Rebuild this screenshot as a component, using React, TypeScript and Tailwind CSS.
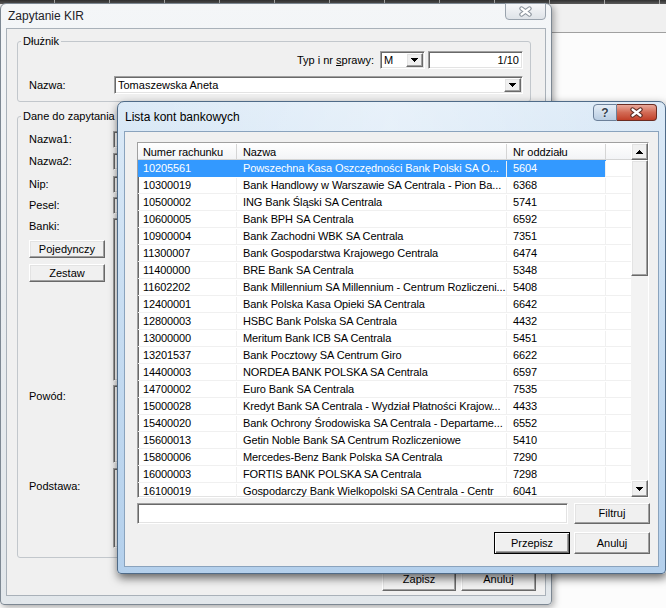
import React from "react";

const banks: [string, string, string][] = [
  ["10205561", "Powszechna Kasa Oszczędności Bank Polski SA O...", "5604"],
  ["10300019", "Bank Handlowy w Warszawie SA Centrala - Pion Ba...", "6368"],
  ["10500002", "ING Bank Śląski SA Centrala", "5741"],
  ["10600005", "Bank BPH SA Centrala", "6592"],
  ["10900004", "Bank Zachodni WBK SA Centrala", "7351"],
  ["11300007", "Bank Gospodarstwa Krajowego Centrala", "6474"],
  ["11400000", "BRE Bank SA Centrala", "5348"],
  ["11602202", "Bank Millennium SA Millennium - Centrum Rozliczeni...", "5408"],
  ["12400001", "Bank Polska Kasa Opieki SA Centrala", "6642"],
  ["12800003", "HSBC Bank Polska SA Centrala", "4432"],
  ["13000000", "Meritum Bank ICB SA Centrala", "5451"],
  ["13201537", "Bank Pocztowy SA Centrum Giro", "6622"],
  ["14400003", "NORDEA BANK POLSKA SA Centrala", "6597"],
  ["14700002", "Euro Bank SA Centrala", "7535"],
  ["15000028", "Kredyt Bank SA Centrala - Wydział Płatności Krajow...", "4433"],
  ["15400020", "Bank Ochrony Środowiska SA Centrala - Departame...", "6552"],
  ["15600013", "Getin Noble Bank SA Centrum Rozliczeniowe", "5410"],
  ["15800006", "Mercedes-Benz Bank Polska SA Centrala", "7290"],
  ["16000003", "FORTIS BANK POLSKA SA Centrala", "7298"],
  ["16100019", "Gospodarczy Bank Wielkopolski SA Centrala - Centr", "6041"],
];

const sunken =
  "border border-t-[#a0a0a0] border-l-[#a0a0a0] border-r-white border-b-white shadow-[inset_1px_1px_0_#696969,inset_-1px_-1px_0_#e3e3e3]";
const raised =
  "bg-[#f0f0f0] border border-t-white border-l-white border-r-[#696969] border-b-[#696969] shadow-[inset_-1px_-1px_0_#a0a0a0,inset_1px_1px_0_#e3e3e3]";

// classic stepped arrow, 7px wide
function Tri({ up }: { up?: boolean }) {
  return (
    <svg width="7" height="4" viewBox="0 0 7 4" shapeRendering="crispEdges" className={up ? "rotate-180" : ""}>
      <path d="M0 0H7V1H6V2H5V3H4V4H3V3H2V2H1V1H0Z" fill="#000" />
    </svg>
  );
}

function XGlyph({ line, edge }: { line: string; edge: string }) {
  return (
    <svg width="15" height="11" viewBox="0 0 15 11">
      <path d="M3.5 2.5L11.5 8.5M11.5 2.5L3.5 8.5" stroke={edge} strokeWidth="4.4" strokeLinecap="round" fill="none" />
      <path d="M3.5 2.5L11.5 8.5M11.5 2.5L3.5 8.5" stroke={line} strokeWidth="2.2" strokeLinecap="round" fill="none" />
    </svg>
  );
}

function Combo({ text, className }: { text: string; className: string }) {
  return (
    <div className={`flex items-stretch bg-white ${sunken} ${className}`}>
      <span className="flex-1 pl-[3px] leading-[16px] whitespace-nowrap overflow-hidden">{text}</span>
      <div className={`w-[17px] m-[1px] flex items-center justify-center ${raised}`}>
        <Tri />
      </div>
    </div>
  );
}

function Button({ label, className }: { label: string; className: string }) {
  return <div className={`flex items-center justify-center ${raised} ${className}`}>{label}</div>;
}

function FormRow({
  label,
  className,
  labelClass,
  text,
}: {
  label: string;
  className: string;
  labelClass: string;
  text?: string;
}) {
  return (
    <div className={`flex ${className}`}>
      <div className={`w-[84px] shrink-0 ${labelClass}`}>{label}</div>
      <div className={`flex-1 bg-white pl-[3px] pt-[5px] ${sunken}`}>{text}</div>
    </div>
  );
}

export default function App() {
  return (
    <div className="relative w-[666px] h-[608px] overflow-hidden bg-[#fcfcfc] font-['Liberation_Sans',Arial,sans-serif] text-[11px] leading-[13px] text-black">
      {/* application behind the windows */}
      <div className="flex h-[4px] bg-linear-to-b from-[#303030] to-[#5c5c5c]">
        {Array.from({ length: 12 }).map((_, i) => (
          <div key={i} className="w-[55px] shrink-0 border-r border-[#a8a8a8]" />
        ))}
      </div>
      <div className="h-[29px] bg-[#f0f0f0] border-b border-[#a0a0a0]" />

      {/* Zapytanie KIR (inactive parent) */}
      <div className="absolute left-0 top-[3px] w-[552px] h-[602px] flex flex-col rounded-t-[6px] rounded-b-[4px] border border-[#7d8893] bg-linear-to-b from-[#f4f6f8] via-[#e9edf0] to-[#e2e7eb] shadow-[2px_2px_7px_rgba(0,0,0,0.35)]">
        <div className="h-[24px] shrink-0 flex items-start">
          <span className="pl-[7px] pt-[5px] text-[12px] leading-[15px] text-[#1e2328]">Zapytanie KIR</span>
          <div className="ml-auto mr-[5px] mt-[-1px] w-[41px] h-[17px] flex items-center justify-center rounded-b-[4px] border border-[#9aa3ad] bg-linear-to-b from-[#f6f7f9] to-[#dfe3e8]">
            <XGlyph line="#ffffff" edge="#8b939c" />
          </div>
        </div>
        <div className="flex-1 mx-[5px] mb-[8px] border border-[#a9b1b9] bg-[#f0f0f0] flex flex-col">
          <fieldset className="mt-[6px] ml-[10px] mr-[14px] border border-[#c2c7cc] rounded-[3px]">
            <legend className="ml-[3px] px-[2px] h-[13px] leading-[13px]">Dłużnik</legend>
            <div className="mt-[3px] h-[18px] flex items-center justify-end pr-[7px]">
              <span>
                Typ i nr <span className="underline">s</span>prawy:
              </span>
              <Combo text="M" className="ml-[6px] w-[45px] h-[18px]" />
              <div className={`ml-[3px] w-[95px] h-[18px] bg-white text-right pr-[3px] leading-[16px] ${sunken}`}>1/10</div>
            </div>
            <div className="mt-[7px] mb-[7px] h-[18px] flex items-center pl-[11px] pr-[7px]">
              <span className="w-[85px] shrink-0">Nazwa:</span>
              <Combo text="Tomaszewska Aneta" className="flex-1 h-[18px]" />
            </div>
          </fieldset>

          <fieldset className="mt-[8px] ml-[10px] mr-[14px] border border-[#c2c7cc] rounded-[3px]">
            <legend className="ml-[3px] px-[2px] h-[13px] leading-[13px]">Dane do zapytania</legend>
            <div className="flex flex-col pt-[8px] pl-[11px] pr-[7px] pb-[9px]">
              <FormRow label="Nazwa1:" className="h-[17px]" labelClass="self-center" />
              <FormRow label="Nazwa2:" className="mt-[5px] h-[17px]" labelClass="self-center" />
              <FormRow label="Nip:" className="mt-[6px] h-[17px]" labelClass="self-center" />
              <FormRow label="Pesel:" className="mt-[4px] h-[17px]" labelClass="self-center" />
              <div className="mt-[4px] h-[163px] flex">
                <div className="w-[84px] shrink-0 flex flex-col pt-[2px]">
                  <span>Banki:</span>
                  <Button label="Pojedynczy" className="mt-[7px] w-[76px] h-[18px]" />
                  <Button label="Zestaw" className="mt-[6px] w-[76px] h-[18px]" />
                </div>
                <div className={`flex-1 bg-white ${sunken}`} />
              </div>
              <FormRow label="Powód:" className="mt-[4px] h-[78px]" labelClass="pt-[5px]" text="Z" />
              <FormRow label="Podstawa:" className="mt-[5px] h-[80px]" labelClass="pt-[12px]" text="I" />
            </div>
          </fieldset>

          <div className="mt-[10px] mr-[9px] flex justify-end gap-[5px]">
            <Button label="Zapisz" className="w-[74px] h-[23px]" />
            <Button label="Anuluj" className="w-[75px] h-[23px]" />
          </div>
        </div>
      </div>

      {/* Lista kont bankowych (active modal) */}
      <div className="absolute left-[117px] top-[101px] w-[549px] h-[473px] flex flex-col rounded-t-[7px] rounded-b-[4px] border border-[#4f6b88] bg-linear-to-b from-[#dceaf7] via-[#c6dcf1] to-[#b4d0ec] shadow-[1px_4px_10px_rgba(0,0,0,0.6)]">
        <div className="h-[29px] shrink-0 flex items-start bg-linear-to-r from-transparent via-[rgba(255,255,255,0.35)] to-transparent">
          <span className="pl-[7px] pt-[8px] text-[12px] leading-[15px]">Lista kont bankowych</span>
          <div className="ml-auto mr-[8px] mt-[2px] flex">
            <div className="w-[24px] h-[17px] flex items-center justify-center rounded-l-[4px] border border-[#6c8099] bg-linear-to-b from-[#e4edf6] to-[#b9cde2] text-[12px] font-bold leading-[12px] text-[#34404c] [text-shadow:0_0_2px_#fff]">
              ?
            </div>
            <div className="w-[40px] h-[17px] flex items-center justify-center rounded-r-[4px] border border-l-0 border-[#6b2c22] bg-linear-to-b from-[#e9a99b] via-[#d26a55] to-[#c13f28]">
              <XGlyph line="#ffffff" edge="#5a2a22" />
            </div>
          </div>
        </div>

        <div className="flex-1 mx-[6px] mb-[6px] border border-[#8aa3bd] bg-[#f0f0f0] flex flex-col pt-[10px] pl-[12px] pr-[8px]">
          <div className={`w-[512px] h-[356px] shrink-0 flex bg-white ${sunken}`}>
            <div className="flex-1 flex flex-col overflow-hidden tracking-[-0.1px]">
              <div className="h-[17px] shrink-0 flex bg-linear-to-b from-white to-[#f3f4f6] border-b border-[#d5d5d5] leading-[16px] pt-[1px]">
                <div className="w-[99px] shrink-0 pl-[5px] border-r border-[#d5d5d5]">Numer rachunku</div>
                <div className="w-[270px] shrink-0 pl-[6px] border-r border-[#d5d5d5]">Nazwa</div>
                <div className="w-[99px] shrink-0 pl-[6px] border-r border-[#d5d5d5]">Nr oddziału</div>
                <div className="flex-1" />
              </div>
              <div className="flex-1 overflow-hidden">
                {banks.map(([nr, name, branch], i) => {
                  const sel = i === 0;
                  return (
                    <div key={nr} className="h-[17px] flex leading-[15px]">
                      <div className={`flex pt-[1px] ${sel ? "bg-[#3399ff] text-white" : "border-b border-[#f0f0f0]"}`}>
                        <div className={`w-[99px] shrink-0 pl-[5px] ${sel ? "" : "border-r border-[#f0f0f0]"}`}>{nr}</div>
                        <div className="w-[270px] shrink-0 pl-[6px] whitespace-nowrap overflow-hidden border-r border-[#f0f0f0]">
                          {name}
                        </div>
                        <div className="w-[99px] shrink-0 pl-[6px] border-r border-[#f0f0f0]">{branch}</div>
                      </div>
                      <div className="flex-1 border-b border-[#f0f0f0]" />
                    </div>
                  );
                })}
              </div>
            </div>
            {/* scrollbar */}
            <div className="w-[17px] shrink-0 flex flex-col bg-[#f3f3f3]">
              <div className={`h-[17px] shrink-0 flex items-center justify-center ${raised}`}>
                <Tri up />
              </div>
              <div className={`h-[116px] shrink-0 ${raised}`} />
              <div className="flex-1" />
              <div className={`h-[17px] shrink-0 flex items-center justify-center ${raised}`}>
                <Tri />
              </div>
            </div>
          </div>

          <div className="mt-[5px] h-[21px] flex">
            <div className={`w-[431px] bg-white ${sunken}`} />
            <Button label="Filtruj" className="ml-auto w-[76px]" />
          </div>
          <div className="mt-[8px] flex justify-end gap-[4px]">
            <div className="w-[76px] h-[22px] flex items-center justify-center bg-[#f0f0f0] border border-black shadow-[inset_1px_1px_0_#ffffff,inset_-1px_-1px_0_#696969,inset_-2px_-2px_0_#a0a0a0]">
              Przepisz
            </div>
            <Button label="Anuluj" className="w-[76px] h-[22px]" />
          </div>
        </div>
      </div>
    </div>
  );
}
